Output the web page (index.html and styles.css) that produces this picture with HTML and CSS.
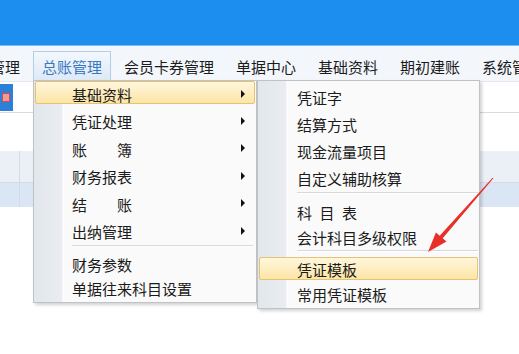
FILE: index.html
```html
<!DOCTYPE html>
<html lang="zh-CN">
<head>
  <meta charset="UTF-8" />
  <title>总账管理</title>
  <link rel="stylesheet" href="styles.css">
</head>
<body>
  <div class="topbar"></div>

  <div class="menubar">
    <span class="mb-item first">财务管理</span>
    <span class="mb-item active">总账管理</span>
    <span class="mb-item">会员卡券管理</span>
    <span class="mb-item">单据中心</span>
    <span class="mb-item">基础资料</span>
    <span class="mb-item">期初建账</span>
    <span class="mb-item">系统管理</span>
  </div>

  <div class="toolbar">
    <div class="tool-btn"><span class="tool-glyph"></span></div>
  </div>

  <div class="blank"></div>
  <div class="grid-row row-a"><span class="cell-first"></span></div>
  <div class="grid-row row-b"><span class="cell-first"></span></div>

  <!-- 下拉菜单 -->
  <div class="menu menu-main">
    <div class="item sub hot">基础资料</div>
    <div class="item sub">凭证处理</div>
    <div class="item sub">账　　簿</div>
    <div class="item sub">财务报表</div>
    <div class="item sub">结　　账</div>
    <div class="item sub">出纳管理</div>
    <div class="sep"></div>
    <div class="item short">财务参数</div>
    <div class="item short">单据往来科目设置</div>
  </div>

  <div class="menu menu-sub">
    <div class="item">凭证字</div>
    <div class="item">结算方式</div>
    <div class="item">现金流量项目</div>
    <div class="item">自定义辅助核算</div>
    <div class="sep sep-a"></div>
    <div class="item mid"><span class="spaced">科目表</span></div>
    <div class="item mid">会计科目多级权限</div>
    <div class="sep sep-b"></div>
    <div class="item mid hot">凭证模板</div>
    <div class="item mid">常用凭证模板</div>
  </div>

  <svg class="pointer" width="519" height="354" viewBox="0 0 519 354">
    <polygon fill="#e8302b" points="493.4,178.3 492.6,177.7 439.7,235.7 435.9,232.4 428,252 446.5,241.6 442.7,238.3"/>
  </svg>
</body>
</html>
```

FILE: styles.css
```css
body {
  margin: 0;
  width: 519px;
  height: 354px;
  overflow: hidden;
  background: #fff;
  font-family: "Noto Sans CJK SC", "Noto Sans", sans-serif;
  font-size: 15px;
  color: #1b1b1b;
  position: relative;
}

.topbar {
  height: 45px;
  background: #1c8ef0;
  border-bottom: 1px solid #7cbaf3;
}

.menubar {
  display: flex;
  gap: 4px;
  height: 36px;
  padding-top: 5px;
  box-sizing: border-box;
  background: #f3f7fb;
  border-bottom: 1px solid #e2e8ee;
  white-space: nowrap;
}
.mb-item {
  height: 30px;
  line-height: 29px;
  padding: 0 8px;
  border: 1px solid transparent;
  border-bottom: 0;
  box-sizing: border-box;
}
.mb-item.first {
  margin-left: -49px;
}
.mb-item.active {
  color: #3a78c2;
  border-color: #b4cde6;
  background: linear-gradient(#f2f8fd, #dde9f7);
}

.toolbar {
  height: 31px;
  border-bottom: 1px solid #d6dce3;
  box-sizing: border-box;
  padding-top: 2px;
}
.tool-btn {
  width: 13px;
  height: 27px;
  background: #2d7fd8;
  display: flex;
  align-items: center;
}
.tool-glyph {
  width: 8px;
  height: 9px;
  margin-left: 2px;
  background: #f29a9a;
  border: 1px solid #d84b4b;
  box-sizing: border-box;
}

.blank {
  height: 38px;
}
.grid-row {
  display: flex;
  border-bottom: 1px solid #d3dbe6;
}
.row-a {
  height: 31px;
  background: #ebf0f7;
}
.row-b {
  height: 24px;
  background: #dbe6f5;
  border-bottom: 0;
}
.cell-first {
  width: 19px;
  border-right: 1px solid #d3dbe6;
}

/* 菜单 */
.menu {
  position: absolute;
  top: 80px;
  border: 1px solid #bfc3c8;
  box-shadow: 2px 2px 3px rgba(0, 0, 0, 0.18);
  background: linear-gradient(to right, #e2e7ec 0, #e9edf1 28px, #ffffff 29px, #fafafa 30px);
  box-sizing: border-box;
}
.menu-main {
  left: 33px;
  width: 224px;
  height: 223px;
}
.menu-sub {
  left: 257px;
  width: 223px;
  height: 229px;
  padding-top: 3px;
}

.item {
  position: relative;
  z-index: 0;
  height: 27.4px;
  line-height: 27.4px;
  padding-left: 38px;
  white-space: nowrap;
}
.menu-sub .item {
  height: 27px;
  line-height: 27px;
  padding-left: 39px;
}
.menu-main .item.short {
  height: 24px;
  line-height: 24px;
}
.menu-sub .item.mid {
  height: 25px;
  line-height: 25px;
}
.item.hot::before {
  content: "";
  position: absolute;
  z-index: -1;
  top: 0;
  left: 1px;
  right: 1px;
  height: 21px;
  border: 1px solid #e4c470;
  border-radius: 2px;
  background: linear-gradient(#fff6dc, #fce5a6);
}
.item.sub::after {
  content: "";
  position: absolute;
  right: 11px;
  top: 50%;
  margin-top: -5px;
  border-left: 4px solid #111;
  border-top: 4px solid transparent;
  border-bottom: 4px solid transparent;
}
.spaced {
  letter-spacing: 7.5px;
}

.sep {
  height: 1px;
  background: #d7d9dc;
  border-bottom: 1px solid #fff;
  margin: 0 3px 6px 38px;
}
.menu-sub .sep {
  margin-left: 39px;
  margin-right: 1px;
}
.sep-a {
  margin-bottom: 6px;
}
.sep-b {
  margin-top: 0;
  margin-bottom: 5px;
}

.pointer {
  position: absolute;
  left: 0;
  top: 0;
}
```
